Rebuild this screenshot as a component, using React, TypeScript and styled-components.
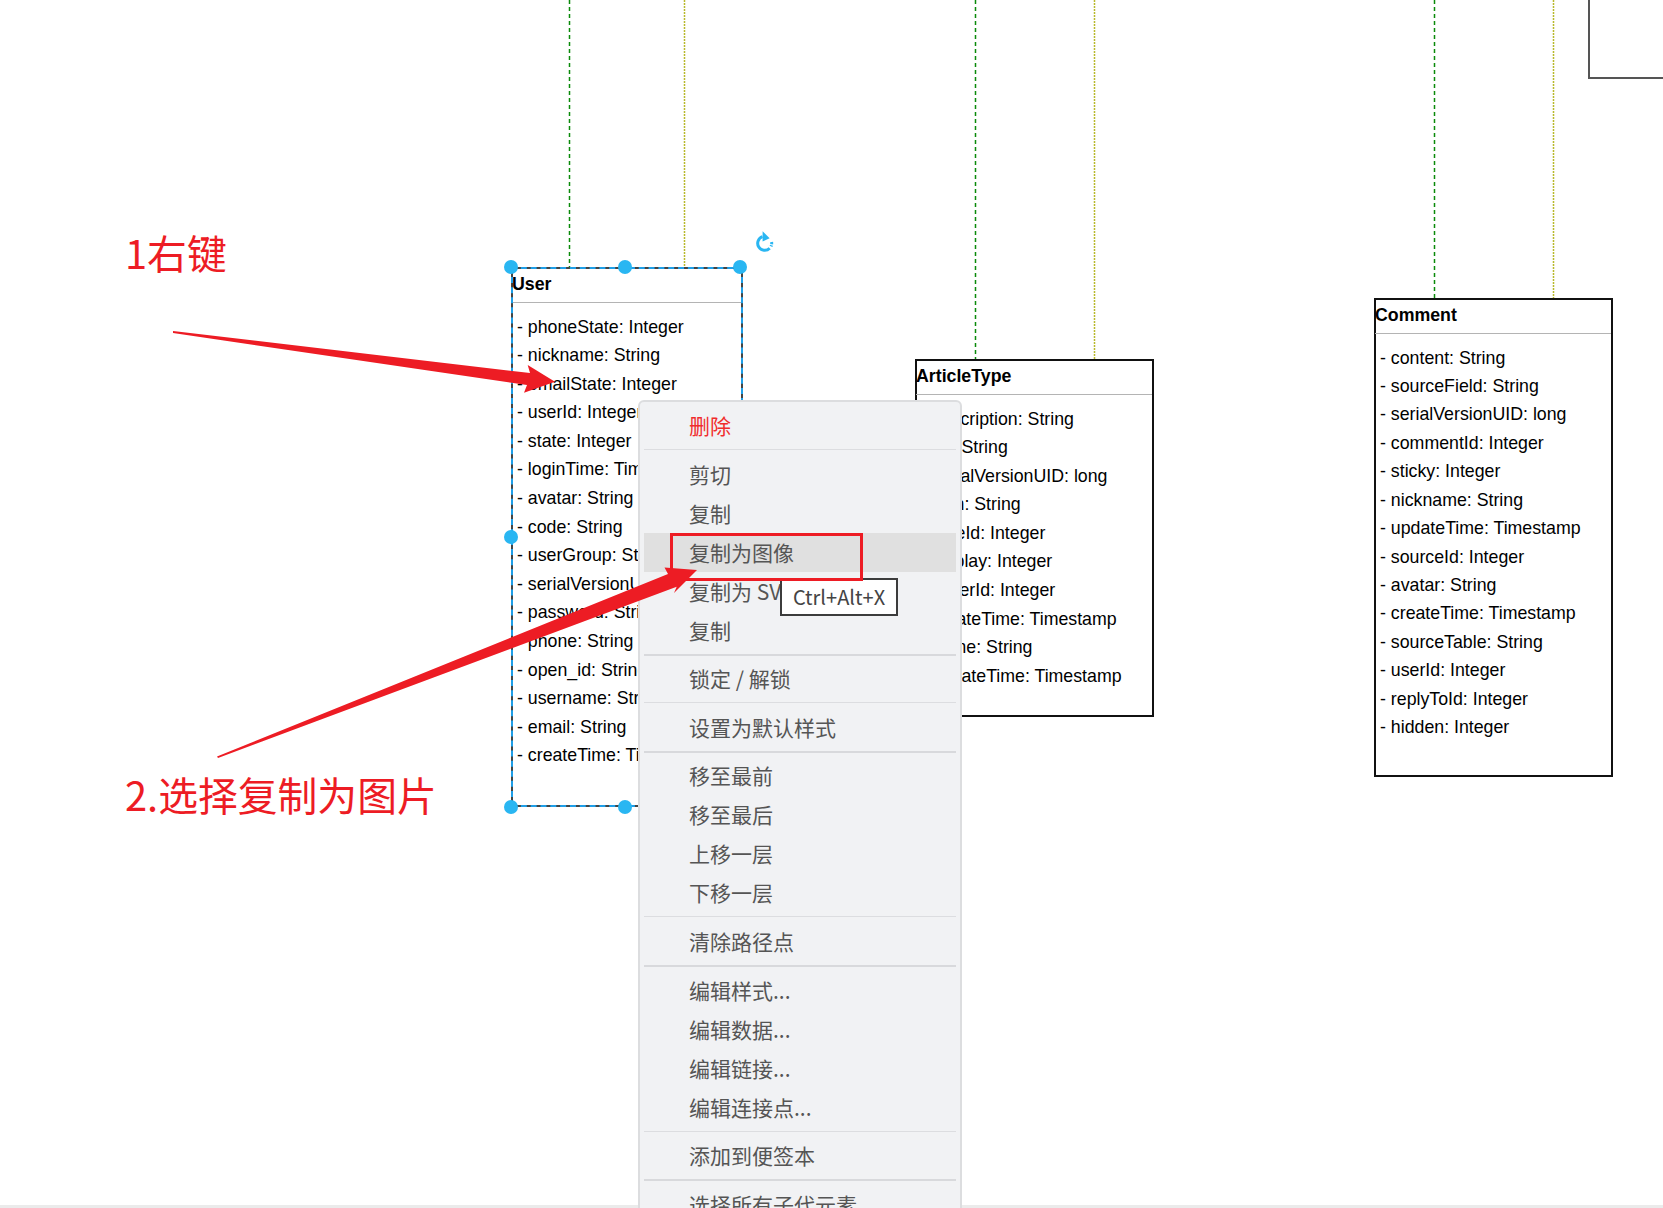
import React from "react";
import styled, { createGlobalStyle } from "styled-components";

const GlobalStyle = createGlobalStyle`
  html, body {
    margin: 0;
    padding: 0;
    background: #fff;
  }
`;

const RED = "#ed1c24";
const HANDLE_BLUE = "#29b6f2";
const SANS = `"Liberation Sans", Arial, sans-serif`;
const CJK = `"Noto Sans CJK SC", "Noto Sans", sans-serif`;

const Page = styled.div`
  position: relative;
  display: flex;
  flex-direction: column;
  width: 1663px;
  height: 1208px;
  overflow: hidden;
  background: #fff;
`;

const Canvas = styled.div`
  position: relative;
  flex: 1;
`;

const BottomEdge = styled.div`
  height: 3px;
  background: #ebebeb;
`;

const Connectors = styled.svg`
  position: absolute;
  left: 0;
  top: 0;
`;

// diagram nodes sit on a free canvas, so each one carries its own place
const ClassBox = styled.div<{ $x: number; $y: number; $w: number; $h: number; $selected?: boolean }>`
  position: absolute;
  left: ${(p) => p.$x}px;
  top: ${(p) => p.$y}px;
  width: ${(p) => p.$w}px;
  height: ${(p) => p.$h}px;
  box-sizing: border-box;
  border: 2px solid ${(p) => (p.$selected ? "#444" : "#111")};
  background: #fff;
  color: #000;
  font-family: ${SANS};
  font-size: 17.76px;
`;

const ClassTitle = styled.div`
  height: 33px;
  line-height: 30px;
  margin-left: -1px;
  font-weight: bold;
  border-bottom: 1px solid #b4b4b4;
`;

const FieldList = styled.ul<{ $row: number }>`
  list-style: none;
  margin: 0;
  padding: 9.5px 0 0 4px;

  li {
    height: ${(p) => p.$row}px;
    line-height: ${(p) => p.$row}px;
    white-space: nowrap;
  }
`;

const SelectionFrame = styled.div`
  position: absolute;
  inset: -2px;
  border: 2px dashed #1f9fe8;
`;

const Handle = styled.span<{ $x: number; $y: number }>`
  position: absolute;
  left: ${(p) => p.$x - 7}px;
  top: ${(p) => p.$y - 7}px;
  width: 14px;
  height: 14px;
  border-radius: 50%;
  background: ${HANDLE_BLUE};
`;

const RotateIcon = styled.svg`
  position: absolute;
  left: 754px;
  top: 230px;
`;

const CornerBox = styled.div`
  position: absolute;
  left: 1588px;
  top: -4px;
  width: 100px;
  height: 79px;
  border: 2px solid #555;
`;

const Note = styled.div<{ $x: number; $y: number }>`
  position: absolute;
  left: ${(p) => p.$x}px;
  top: ${(p) => p.$y}px;
  color: ${RED};
  font-family: ${CJK};
  font-size: 39.8px;
  line-height: 50px;
  white-space: nowrap;
`;

const Menu = styled.div`
  position: absolute;
  left: 638px;
  top: 400px;
  width: 324px;
  height: 840px;
  box-sizing: border-box;
  padding: 4px 4px 0 4px;
  background: #f1f2f4;
  border: 2px solid #dcdddf;
  border-radius: 6px;
  font-family: ${CJK};
  font-size: 21px;
  color: #555;
`;

const MenuItem = styled.div<{ $danger?: boolean; $active?: boolean }>`
  height: 39px;
  line-height: 39px;
  padding-left: 45px;
  white-space: nowrap;
  color: ${(p) => (p.$danger ? "#f02c2c" : "#555")};
  background: ${(p) => (p.$active ? "#e0e0e0" : "transparent")};
`;

const MenuSeparator = styled.div<{ $thick?: boolean }>`
  height: ${(p) => (p.$thick ? 2 : 1)}px;
  margin: ${(p) => (p.$thick ? "4px 0 3.6px" : "4px 0 4.6px")};
  background: ${(p) => (p.$thick ? "#d8d9dc" : "#dcdde0")};
`;

const Shortcut = styled.div`
  position: absolute;
  left: 780px;
  top: 578px;
  width: 118px;
  height: 38px;
  box-sizing: border-box;
  border: 2px solid #3c3c3c;
  background: #fff;
  color: #444;
  font-family: ${CJK};
  font-size: 20px;
  line-height: 34px;
  text-align: center;
  white-space: nowrap;
`;

const HighlightBox = styled.div`
  position: absolute;
  left: 670px;
  top: 533px;
  width: 193px;
  height: 48px;
  box-sizing: border-box;
  border: 3px solid ${RED};
`;

const ArrowLayer = styled.svg`
  position: absolute;
  left: 0;
  top: 0;
  pointer-events: none;
`;

const userFields = [
  "phoneState: Integer",
  "nickname: String",
  "emailState: Integer",
  "userId: Integer",
  "state: Integer",
  "loginTime: Timestamp",
  "avatar: String",
  "code: String",
  "userGroup: String",
  "serialVersionUID: long",
  "password: String",
  "phone: String",
  "open_id: String",
  "username: String",
  "email: String",
  "createTime: Timestamp",
];

const articleTypeFields = [
  "description: String",
  "url: String",
  "serialVersionUID: long",
  "icon: String",
  "typeId: Integer",
  "display: Integer",
  "coverId: Integer",
  "createTime: Timestamp",
  "name: String",
  "updateTime: Timestamp",
];

const commentFields = [
  "content: String",
  "sourceField: String",
  "serialVersionUID: long",
  "commentId: Integer",
  "sticky: Integer",
  "nickname: String",
  "updateTime: Timestamp",
  "sourceId: Integer",
  "avatar: String",
  "createTime: Timestamp",
  "sourceTable: String",
  "userId: Integer",
  "replyToId: Integer",
  "hidden: Integer",
];

type MenuEntry = { label?: string; danger?: boolean; active?: boolean; thick?: boolean };

const menuEntries: MenuEntry[] = [
  { label: "删除", danger: true },
  {},
  { label: "剪切" },
  { label: "复制" },
  { label: "复制为图像", active: true },
  { label: "复制为 SVG" },
  { label: "复制" },
  { thick: true },
  { label: "锁定 / 解锁" },
  {},
  { label: "设置为默认样式" },
  { thick: true },
  { label: "移至最前" },
  { label: "移至最后" },
  { label: "上移一层" },
  { label: "下移一层" },
  {},
  { label: "清除路径点" },
  { thick: true },
  { label: "编辑样式..." },
  { label: "编辑数据..." },
  { label: "编辑链接..." },
  { label: "编辑连接点..." },
  {},
  { label: "添加到便签本" },
  { thick: true },
  { label: "选择所有子代元素" },
];

const connectorLines = [
  { x: 569.5, y2: 267, stroke: "#0a8a0a", dash: "4 3" },
  { x: 684.5, y2: 267, stroke: "#b9b92c", dash: "2 1" },
  { x: 975.5, y2: 360, stroke: "#0a8a0a", dash: "4 3" },
  { x: 1094.5, y2: 360, stroke: "#b9b92c", dash: "2 1" },
  { x: 1434.5, y2: 299, stroke: "#0a8a0a", dash: "4 3" },
  { x: 1553.5, y2: 299, stroke: "#b9b92c", dash: "2 1" },
];

function Fields({ items, row = 28.6 }: { items: string[]; row?: number }) {
  return (
    <FieldList $row={row}>
      {items.map((item) => (
        <li key={item}>- {item}</li>
      ))}
    </FieldList>
  );
}

function App() {
  return (
    <Page>
      <GlobalStyle />
      <Canvas>
        <Connectors width="1663" height="400">
          {connectorLines.map((line) => (
            <line
              key={line.x}
              x1={line.x}
              x2={line.x}
              y1="0"
              y2={line.y2}
              stroke={line.stroke}
              strokeWidth="1.5"
              strokeDasharray={line.dash}
            />
          ))}
        </Connectors>

        <CornerBox />

        <ClassBox $x={511} $y={267} $w={232} $h={540} $selected>
          <ClassTitle>User</ClassTitle>
          <Fields items={userFields} />
          <SelectionFrame />
        </ClassBox>

        <ClassBox $x={915} $y={359} $w={239} $h={358}>
          <ClassTitle>ArticleType</ClassTitle>
          <Fields items={articleTypeFields} />
        </ClassBox>

        <ClassBox $x={1374} $y={298} $w={239} $h={479}>
          <ClassTitle>Comment</ClassTitle>
          <Fields items={commentFields} row={28.45} />
        </ClassBox>

        <Handle $x={511} $y={267} />
        <Handle $x={625} $y={267} />
        <Handle $x={740} $y={267} />
        <Handle $x={511} $y={537} />
        <Handle $x={511} $y={807} />
        <Handle $x={625} $y={807} />

        <RotateIcon width="22" height="24" viewBox="0 0 22 24">
          <path
            d="M8.5 6.65 A7 7 0 1 0 15.7 18.2"
            fill="none"
            stroke={HANDLE_BLUE}
            strokeWidth="3"
          />
          <path
            d="M17.6 12 A7 7 0 0 1 17 16.4"
            fill="none"
            stroke={HANDLE_BLUE}
            strokeWidth="3"
            strokeDasharray="2.2 1"
          />
          <polygon points="8.6,1.2 15.6,8.2 8.6,11.6" fill={HANDLE_BLUE} />
        </RotateIcon>

        <Note $x={125} $y={227}>1右键</Note>
        <Note $x={125} $y={769}>2.选择复制为图片</Note>
      </Canvas>
      <BottomEdge />

      <Menu>
        {menuEntries.map((entry, index) =>
          entry.label ? (
            <MenuItem key={index} $danger={entry.danger} $active={entry.active}>
              {entry.label}
            </MenuItem>
          ) : (
            <MenuSeparator key={index} $thick={entry.thick} />
          )
        )}
      </Menu>
      <Shortcut>Ctrl+Alt+X</Shortcut>
      <HighlightBox />

      <ArrowLayer width="1663" height="1208">
        <polygon
          points="173,331 530,373 527.7,365 555,381.7 524,392.7 527,385 173,333"
          fill={RED}
        />
        <polygon
          points="217,756.5 668,574 664.5,567.5 697,570 674,593 676.7,586.7 218,758"
          fill={RED}
        />
      </ArrowLayer>
    </Page>
  );
}

export default App;
